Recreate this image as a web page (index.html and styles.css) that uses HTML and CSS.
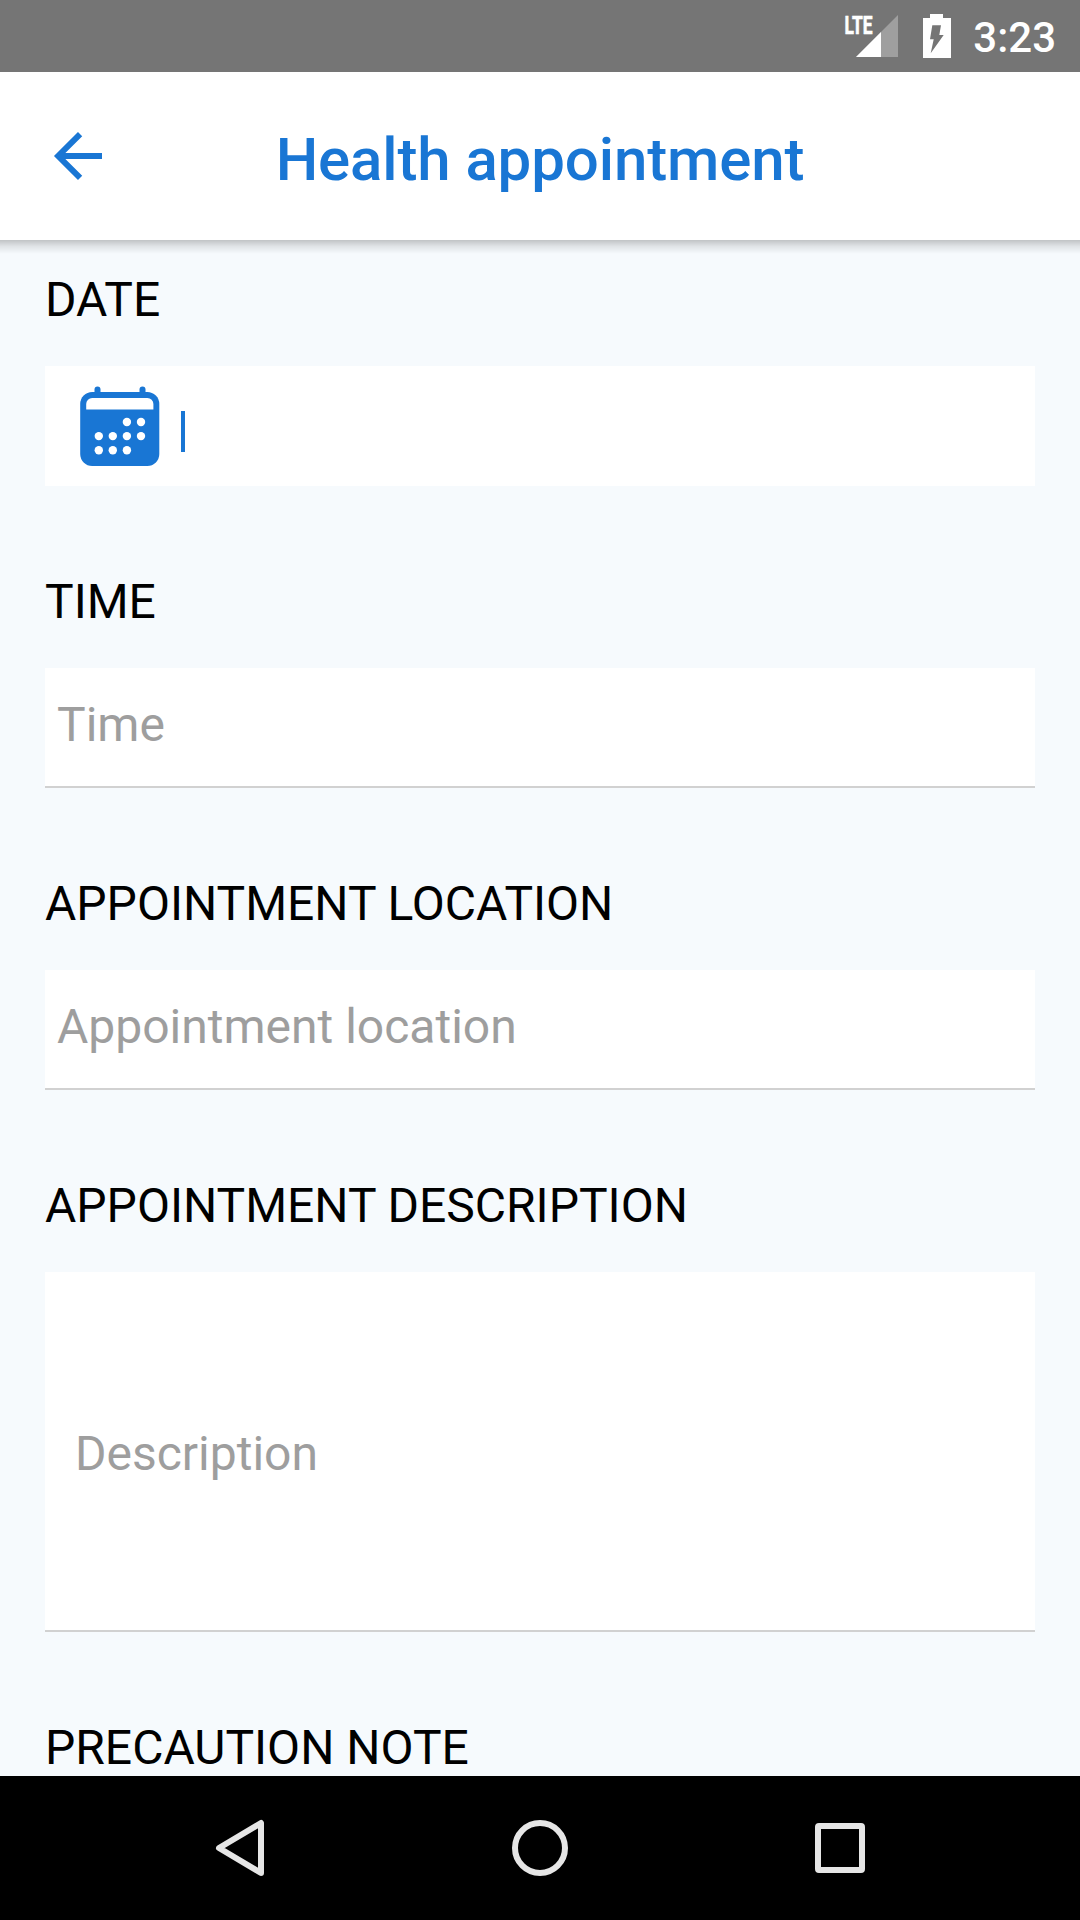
FILE: index.html
```html
<!DOCTYPE html>
<html lang="en">
<head>
    <meta charset="UTF-8">
    <meta name="viewport" content="width=device-width, initial-scale=1.0">
    <title>Health appointment</title>
    <link rel="stylesheet" href="styles.css">
</head>
<body>
    <div class="status-bar">
        <svg class="signal-icon" width="56" height="72" viewBox="0 0 56 72">
            <text class="signal-label" x="0.5" y="34" textLength="28" lengthAdjust="spacingAndGlyphs">LTE</text>
            <path d="M54 15v42H12z" fill="#9f9f9f"/>
            <path d="M37 32v25H12z" fill="#fff"/>
        </svg>
        <svg class="battery-icon" width="28" height="72" viewBox="0 0 28 72">
            <path d="M7 14h13v4h8v40H0V18h7z" fill="#fff"/>
            <path d="M9.3 25.3H18L16.3 35h4.4L7.7 53.3l3-14H7z" fill="#757575"/>
        </svg>
        <span class="clock">3:23</span>
    </div>

    <header class="header">
        <button class="back-btn" type="button" aria-label="Back">
            <svg width="72" height="72" viewBox="0 0 24 24">
                <path d="M12.7 4.7L5.4 12l7.3 7.3M5.4 12H20" fill="none" stroke="#1976d4" stroke-width="2"/>
            </svg>
        </button>
        <h1>Health appointment</h1>
    </header>

    <main class="form">
        <div class="input-group">
            <label>DATE</label>
            <div class="date-field">
                <svg class="calendar-icon" width="80" height="81" viewBox="0 0 80 81">
                    <g fill="#1976d4">
                        <rect x="14.5" y="0.5" width="6" height="12" rx="3"/>
                        <rect x="59.5" y="0.5" width="6" height="12" rx="3"/>
                        <rect x="0.2" y="6" width="79.1" height="74" rx="12"/>
                    </g>
                    <g fill="#fff">
                        <path d="M6.2 23.5V18a6 6 0 0 1 6-6h55.2a6 6 0 0 1 6 6v5.5z"/>
                        <circle cx="46.9" cy="36" r="4.2"/>
                        <circle cx="61" cy="36" r="4.2"/>
                        <circle cx="18.8" cy="50.1" r="4.2"/>
                        <circle cx="32.8" cy="50.1" r="4.2"/>
                        <circle cx="46.9" cy="50.1" r="4.2"/>
                        <circle cx="61" cy="50.1" r="4.2"/>
                        <circle cx="18.8" cy="64.2" r="4.2"/>
                        <circle cx="32.8" cy="64.2" r="4.2"/>
                        <circle cx="46.9" cy="64.2" r="4.2"/>
                    </g>
                </svg>
                <span class="cursor"></span>
            </div>
        </div>

        <div class="input-group">
            <label for="time">TIME</label>
            <input type="text" id="time" placeholder="Time">
        </div>

        <div class="input-group">
            <label for="location">APPOINTMENT LOCATION</label>
            <input type="text" id="location" placeholder="Appointment location">
        </div>

        <div class="input-group">
            <label for="description">APPOINTMENT DESCRIPTION</label>
            <textarea id="description" placeholder="Description"></textarea>
        </div>

        <div class="input-group">
            <label>PRECAUTION NOTE</label>
        </div>
    </main>

    <nav class="nav-bar">
        <svg width="60" height="60" viewBox="0 0 60 60">
            <path d="M51 5v50L9 30z"/>
        </svg>
        <svg width="60" height="60" viewBox="0 0 60 60">
            <circle cx="30" cy="30" r="25"/>
        </svg>
        <svg width="60" height="60" viewBox="0 0 60 60">
            <rect x="8" y="8" width="44" height="44" rx="1"/>
        </svg>
    </nav>
</body>
</html>
```

FILE: styles.css
```css
* {
    margin: 0;
    padding: 0;
    box-sizing: border-box;
    font-family: Roboto, sans-serif;
}

body {
    height: 1920px;
    display: flex;
    flex-direction: column;
    overflow: hidden;
    background: #f6fafd;
}

svg {
    display: block;
    flex-shrink: 0;
}

.status-bar {
    height: 72px;
    flex-shrink: 0;
    display: flex;
    justify-content: flex-end;
    align-items: center;
    padding-right: 24px;
    background: #757575;
    color: white;
}

.signal-icon {
    margin-right: 23px;
}

.signal-label {
    font-size: 26.5px;
    font-weight: 700;
    fill: white;
    stroke: white;
    stroke-width: 0.7px;
}

.battery-icon {
    margin-right: 22px;
}

.clock {
    font-size: 42px;
    font-weight: 500;
    line-height: 50px;
    padding-top: 3px;
}

.header {
    position: relative;
    height: 168px;
    flex-shrink: 0;
    display: flex;
    align-items: center;
    padding: 0 42px;
    background: white;
}

/* shadow under the app bar */
.header::after {
    content: '';
    position: absolute;
    left: 0;
    right: 0;
    top: 100%;
    height: 14px;
    background: linear-gradient(rgba(0, 0, 0, 0.22), rgba(0, 0, 0, 0.09) 45%, rgba(0, 0, 0, 0));
}

.back-btn {
    width: 72px;
    height: 72px;
    border: none;
    background: none;
    cursor: pointer;
}

h1 {
    flex: 1;
    margin-right: 72px;
    padding-top: 8px;
    text-align: center;
    color: #1976d4;
    font-size: 60px;
    font-weight: 500;
    line-height: 70px;
    letter-spacing: -0.12px;
}

.form {
    flex: 1;
    min-height: 0;
    overflow: hidden;
    display: flex;
    flex-direction: column;
    gap: 88px;
    padding: 32px 45px 0;
}

.input-group {
    display: flex;
    flex-direction: column;
    gap: 38px;
    flex-shrink: 0;
}

label {
    color: black;
    font-size: 48px;
    line-height: 56px;
}

input, textarea {
    width: 100%;
    height: 120px;
    padding: 28px 12px 34px;
    border: none;
    border-bottom: 2px solid #d1d1d1;
    background: white;
    font-size: 48px;
    line-height: 56px;
    outline: none;
    resize: none;
}

textarea {
    height: 360px;
    padding: 154px 30px 148px;
}

input::placeholder, textarea::placeholder {
    color: #9e9e9e;
    opacity: 1;
}

.date-field {
    height: 120px;
    display: flex;
    align-items: flex-start;
    padding: 20px 35px;
    background: white;
}

.cursor {
    width: 4px;
    height: 41px;
    margin: 25px 0 0 21px;
    background: #1976d4;
}

.nav-bar {
    height: 144px;
    flex-shrink: 0;
    display: flex;
    justify-content: space-between;
    align-items: center;
    padding: 0 210px;
    background: black;
}

.nav-bar svg {
    fill: none;
    stroke: #e6e6e6;
    stroke-width: 6;
    stroke-linejoin: round;
}
```
